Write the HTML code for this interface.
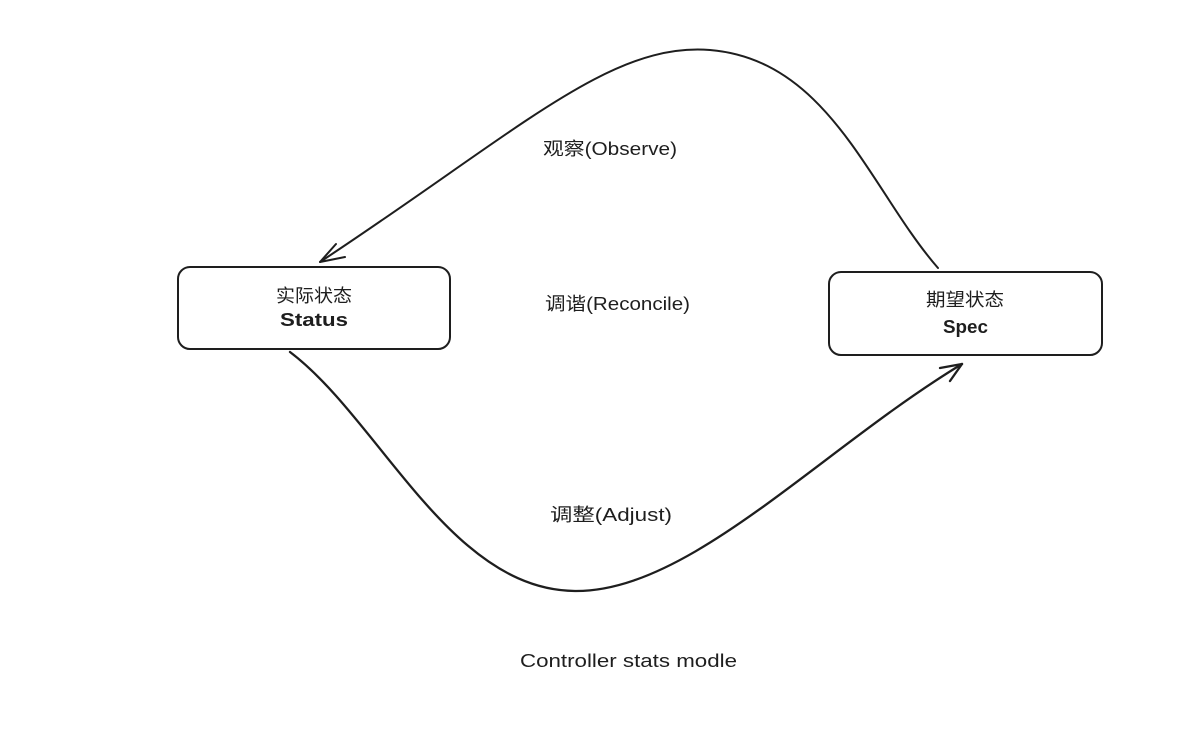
<!DOCTYPE html>
<html><head><meta charset="utf-8"><style>
html,body{margin:0;padding:0;background:#fff;}
svg{display:block}
text{font-family:"Liberation Sans","Noto Sans CJK SC",sans-serif;fill:#1e1e1e;}
</style></head><body>
<svg width="1188" height="737" viewBox="0 0 1188 737" xmlns="http://www.w3.org/2000/svg">
<g fill="none" stroke="#1e1e1e" stroke-width="2" stroke-linecap="round">
<rect x="178" y="267" width="272" height="82" rx="12"/>
<rect x="829" y="272" width="273" height="83" rx="12"/>
<path d="M938 268 C870 190 830 60 710 50 C610 42 520 130 320 262"/>
<path d="M320 262 L336 244 M320 262 L345 257"/>
<path d="M290 352 C380 420 450 590 575 591 C690 592 820 450 962 364" stroke-width="2.3"/>
<path d="M962 364 L940 368 M962 364 L950 381" stroke-width="2.3"/>
</g>
<g font-size="18">
<text x="543" y="155" textLength="134" lengthAdjust="spacingAndGlyphs">观察(Observe)</text>
<text x="545" y="310" textLength="145" lengthAdjust="spacingAndGlyphs">调谐(Reconcile)</text>
<text x="550" y="521" textLength="122" lengthAdjust="spacingAndGlyphs">调整(Adjust)</text>
<text x="520" y="667" textLength="217" lengthAdjust="spacingAndGlyphs">Controller stats modle</text>
<text x="276" y="302" textLength="76" lengthAdjust="spacingAndGlyphs">实际状态</text>
<text x="280" y="326" textLength="68" lengthAdjust="spacingAndGlyphs" font-weight="bold">Status</text>
<text x="926" y="306" textLength="78" lengthAdjust="spacingAndGlyphs">期望状态</text>
<text x="943" y="333" textLength="45" lengthAdjust="spacingAndGlyphs" font-weight="bold">Spec</text>
</g>
</svg>
</body></html>
